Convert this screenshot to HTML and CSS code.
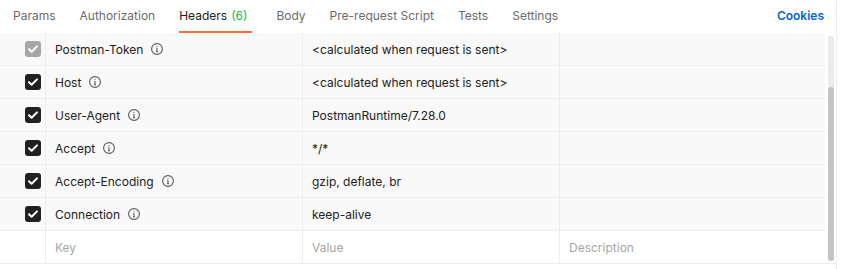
FILE: index.html
```html
<!DOCTYPE html>
<html lang="en">

<head>
  <meta charset="UTF-8">
  <meta name="viewport" content="width=device-width, initial-scale=1.0">
  <title>Headers</title>
  <link rel="stylesheet" href="styles.css">
</head>

<body>
  <div class="pane">
    <div class="tabs">
      <div class="tab">Params</div>
      <div class="tab">Authorization</div>
      <div class="tab active">Headers <span class="count">(6)</span></div>
      <div class="tab">Body</div>
      <div class="tab">Pre-request Script</div>
      <div class="tab">Tests</div>
      <div class="tab">Settings</div>
      <div class="cookies">Cookies</div>
    </div>

    <div class="table-wrap">
      <div class="table">
        <div class="row auto">
          <div class="cell check"><span class="box disabled"><svg viewBox="0 0 16 16"><path d="M4 8.2l2.6 2.6L12 5.4" /></svg></span></div>
          <div class="cell key">Postman-Token <svg class="info" viewBox="0 0 12 12"><circle cx="6" cy="6" r="5.4" /><path d="M6 5.3v3.4M5 8.7h2M5.2 5.3H6" /><circle class="dot" cx="6" cy="3.5" r="0.6" /></svg></div>
          <div class="cell">&lt;calculated when request is sent&gt;</div>
          <div class="cell"></div>
        </div>
        <div class="row auto">
          <div class="cell check"><span class="box"><svg viewBox="0 0 16 16"><path d="M4 8.2l2.6 2.6L12 5.4" /></svg></span></div>
          <div class="cell key">Host <svg class="info" viewBox="0 0 12 12"><circle cx="6" cy="6" r="5.4" /><path d="M6 5.3v3.4M5 8.7h2M5.2 5.3H6" /><circle class="dot" cx="6" cy="3.5" r="0.6" /></svg></div>
          <div class="cell">&lt;calculated when request is sent&gt;</div>
          <div class="cell"></div>
        </div>
        <div class="row auto">
          <div class="cell check"><span class="box"><svg viewBox="0 0 16 16"><path d="M4 8.2l2.6 2.6L12 5.4" /></svg></span></div>
          <div class="cell key">User-Agent <svg class="info" viewBox="0 0 12 12"><circle cx="6" cy="6" r="5.4" /><path d="M6 5.3v3.4M5 8.7h2M5.2 5.3H6" /><circle class="dot" cx="6" cy="3.5" r="0.6" /></svg></div>
          <div class="cell">PostmanRuntime/7.28.0</div>
          <div class="cell"></div>
        </div>
        <div class="row auto">
          <div class="cell check"><span class="box"><svg viewBox="0 0 16 16"><path d="M4 8.2l2.6 2.6L12 5.4" /></svg></span></div>
          <div class="cell key">Accept <svg class="info" viewBox="0 0 12 12"><circle cx="6" cy="6" r="5.4" /><path d="M6 5.3v3.4M5 8.7h2M5.2 5.3H6" /><circle class="dot" cx="6" cy="3.5" r="0.6" /></svg></div>
          <div class="cell">*/*</div>
          <div class="cell"></div>
        </div>
        <div class="row auto">
          <div class="cell check"><span class="box"><svg viewBox="0 0 16 16"><path d="M4 8.2l2.6 2.6L12 5.4" /></svg></span></div>
          <div class="cell key">Accept-Encoding <svg class="info" viewBox="0 0 12 12"><circle cx="6" cy="6" r="5.4" /><path d="M6 5.3v3.4M5 8.7h2M5.2 5.3H6" /><circle class="dot" cx="6" cy="3.5" r="0.6" /></svg></div>
          <div class="cell">gzip, deflate, br</div>
          <div class="cell"></div>
        </div>
        <div class="row auto">
          <div class="cell check"><span class="box"><svg viewBox="0 0 16 16"><path d="M4 8.2l2.6 2.6L12 5.4" /></svg></span></div>
          <div class="cell key">Connection <svg class="info" viewBox="0 0 12 12"><circle cx="6" cy="6" r="5.4" /><path d="M6 5.3v3.4M5 8.7h2M5.2 5.3H6" /><circle class="dot" cx="6" cy="3.5" r="0.6" /></svg></div>
          <div class="cell">keep-alive</div>
          <div class="cell"></div>
        </div>
        <div class="row">
          <div class="cell check"></div>
          <div class="cell placeholder">Key</div>
          <div class="cell placeholder">Value</div>
          <div class="cell placeholder">Description</div>
        </div>
      </div>
      <div class="scroll">
        <div class="track">
          <div class="thumb"></div>
        </div>
      </div>
    </div>
  </div>
</body>

</html>
```

FILE: styles.css
```css
body {
  margin: 0;
  background: #fff;
  font-family: 'Inter', 'Noto Sans', sans-serif;
  font-size: 12px;
  color: #212121;
}

.pane {
  width: 836px;
  height: 269px;
  border-right: 1px solid #ededed;
}

.tabs {
  display: flex;
  align-items: stretch;
  height: 33px;
  padding-left: 13px;
  padding-right: 12px;
  gap: 24px;
}

.tab {
  display: flex;
  align-items: center;
  color: #6b6b6b;
  border-bottom: 2px solid transparent;
  box-sizing: border-box;
  white-space: nowrap;
}

.tab.active {
  color: #212121;
  border-bottom-color: #ff6c37;
  padding-right: 5px;
}

.tab .count {
  color: #0cbb52;
  margin-left: 4px;
}

.cookies {
  margin-left: auto;
  display: flex;
  align-items: center;
  color: #0265d2;
  font-weight: 600;
  padding-bottom: 2px;
}

.table-wrap {
  display: flex;
  border-bottom: 1px solid #ededed;
  height: 230px;
}

.table {
  width: 825px;
  flex: none;
}

.row {
  display: grid;
  grid-template-columns: 46px 257px 257px 265px;
  height: 33px;
  box-sizing: border-box;
  border-bottom: 1px solid #ededed;
}

.row:last-child {
  border-bottom: none;
}

.row.auto {
  background: #f9f9f9;
}

.cell {
  display: flex;
  align-items: center;
  padding-left: 9px;
  border-right: 1px solid #ededed;
  white-space: nowrap;
  overflow: hidden;
}

.cell:last-child {
  border-right: none;
}

.cell.check {
  justify-content: flex-end;
  padding-left: 0;
  padding-right: 4px;
}

.box {
  width: 16px;
  height: 16px;
  border-radius: 3px;
  background: #212121;
  display: flex;
}

.box.disabled {
  background: #a6a6a6;
}

.box svg {
  width: 16px;
  height: 16px;
  fill: none;
  stroke: #fff;
  stroke-width: 2;
  stroke-linecap: round;
  stroke-linejoin: round;
}

.info {
  width: 12px;
  height: 12px;
  margin-left: 8px;
  fill: none;
  stroke: #5a5a5a;
  stroke-width: 1.1;
}

.info .dot {
  fill: #5a5a5a;
  stroke: none;
}

.placeholder {
  color: #a6a6a6;
}

.scroll {
  flex: 1;
  padding: 3px 0 0 3px;
}

.track {
  width: 6px;
  height: 225px;
  background: #ebebeb;
  border-radius: 3px;
  display: flex;
  flex-direction: column;
  justify-content: flex-end;
}

.thumb {
  height: 174px;
  background: #c4c4c4;
  border-radius: 3px;
}
```
